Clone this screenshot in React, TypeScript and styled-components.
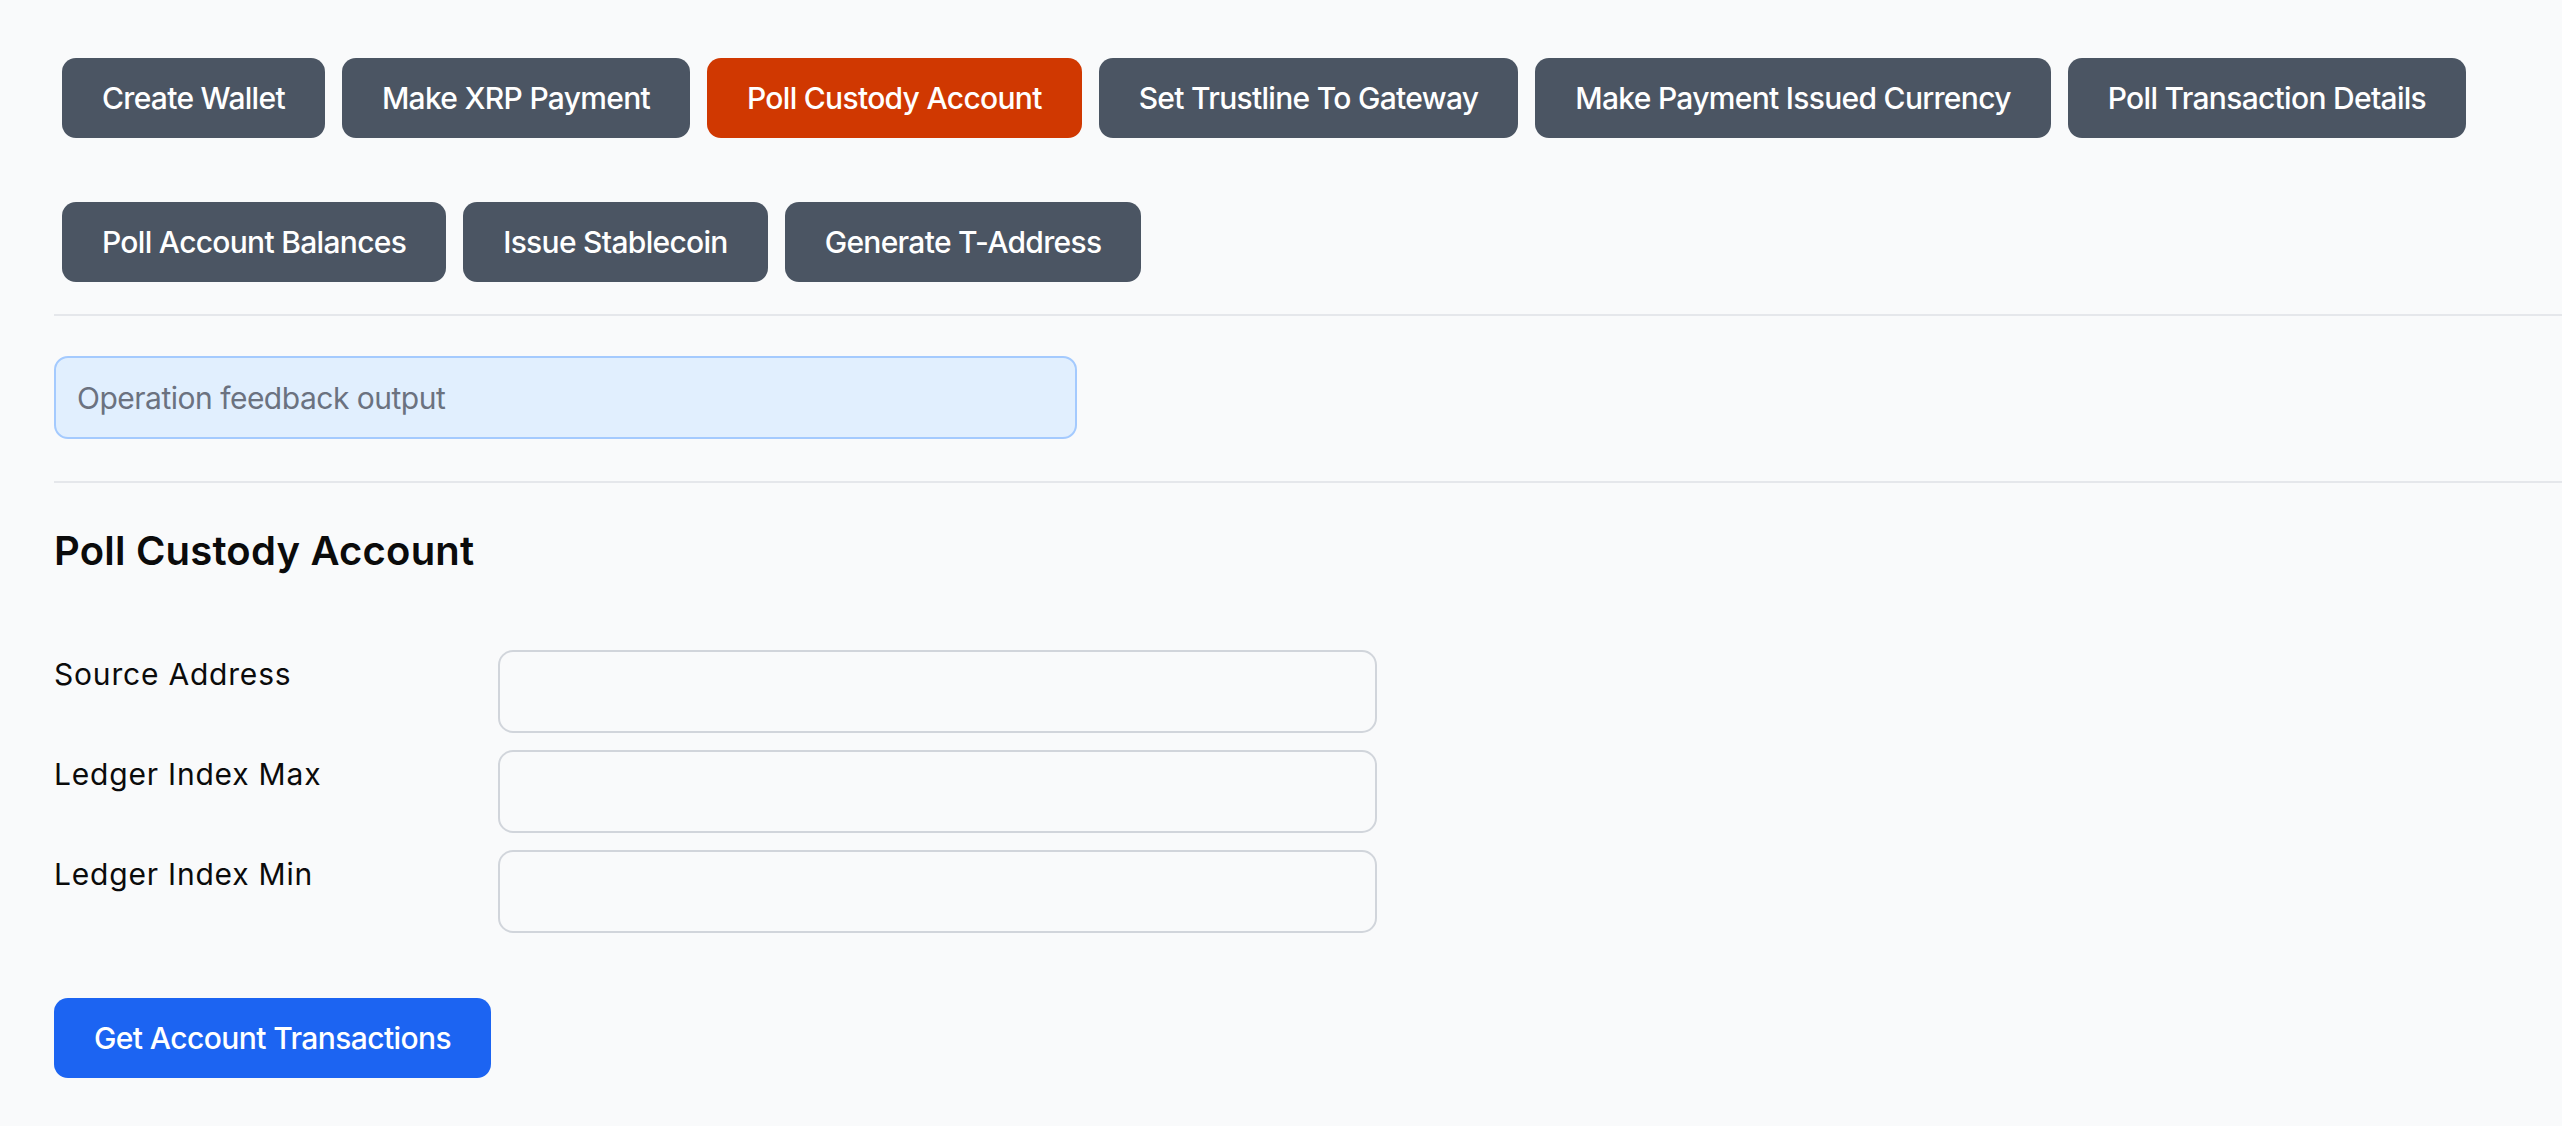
import React, { useState } from 'react'
import styled, { createGlobalStyle } from 'styled-components'

const colors = {
  page: '#F9FAFB',
  slate: '#4B5563',
  active: '#D03801',
  primary: '#1C64F2',
  divider: '#E5E7EB',
  inputBorder: '#D1D5DB',
  infoBg: '#E1EFFE',
  infoBorder: '#A4CAFE',
  muted: '#6B7280',
  text: '#0B0B0B',
}

const GlobalStyle = createGlobalStyle`
  html, body {
    margin: 0;
    padding: 0;
    background: ${colors.page};
  }
  body {
    font-family: Inter, "Noto Sans", "Liberation Sans", sans-serif;
    color: ${colors.text};
  }
  * { box-sizing: border-box; }
`

const PageSt = styled.div`
  min-height: 100vh;
  padding-left: 54px;
`

const ToolbarSt = styled.div`
  display: flex;
  flex-wrap: wrap;
  gap: 64px 17px;
  padding: 58px 0 32px 8px;
`

const OpButtonSt = styled.button<{ $active: boolean }>`
  height: 80px;
  padding: 0 40px;
  border: none;
  border-radius: 14px;
  background-color: ${({ $active }) => ($active ? colors.active : colors.slate)};
  color: #fff;
  font-family: inherit;
  font-size: 30px;
  font-weight: 500;
  letter-spacing: -0.7px;
  cursor: pointer;
  white-space: nowrap;
`

const DividerSt = styled.hr`
  margin: 0;
  border: none;
  height: 2px;
  background: ${colors.divider};
`

const FeedbackSt = styled.div`
  width: 1023px;
  height: 83px;
  margin: 40px 0 42px;
  padding: 0 21px;
  display: flex;
  align-items: center;
  border: 2px solid ${colors.infoBorder};
  border-radius: 14px;
  background: ${colors.infoBg};
  color: ${colors.muted};
  font-size: 30px;
  letter-spacing: -0.5px;
`

const TitleSt = styled.h2`
  margin: 38px 0 69px;
  font-size: 40px;
  line-height: 60px;
  font-weight: 600;
  letter-spacing: 0.2px;
`

const FormSt = styled.div`
  display: grid;
  grid-template-columns: 444px 879px;
  row-gap: 17px;
`

const LabelSt = styled.label`
  font-size: 30px;
  line-height: 45px;
  padding-top: 2px;
  letter-spacing: 0.8px;
`

const InputSt = styled.input`
  height: 83px;
  border: 2px solid ${colors.inputBorder};
  border-radius: 15px;
  background: ${colors.page};
  padding: 0 20px;
  font-family: inherit;
  font-size: 30px;
  outline: none;
`

const SubmitSt = styled.button`
  margin-top: 65px;
  height: 80px;
  padding: 0 40px;
  border: none;
  border-radius: 14px;
  background: ${colors.primary};
  color: #fff;
  font-family: inherit;
  font-size: 30px;
  font-weight: 500;
  letter-spacing: -0.6px;
  cursor: pointer;
`

const operations = [
  'Create Wallet',
  'Make XRP Payment',
  'Poll Custody Account',
  'Set Trustline To Gateway',
  'Make Payment Issued Currency',
  'Poll Transaction Details',
  'Poll Account Balances',
  'Issue Stablecoin',
  'Generate T-Address',
]

const fields = [
  { id: 'sourceAddress', label: 'Source Address' },
  { id: 'ledgerIndexMax', label: 'Ledger Index Max' },
  { id: 'ledgerIndexMin', label: 'Ledger Index Min' },
]

export default function App() {
  const [active, setActive] = useState('Poll Custody Account')

  return (
    <>
      <GlobalStyle />
      <PageSt>
        <ToolbarSt>
          {operations.map((op) => (
            <OpButtonSt key={op} $active={op === active} onClick={() => setActive(op)}>
              {op}
            </OpButtonSt>
          ))}
        </ToolbarSt>
        <DividerSt />
        <FeedbackSt>Operation feedback output</FeedbackSt>
        <DividerSt />
        <TitleSt>{active}</TitleSt>
        <FormSt>
          {fields.map((f) => (
            <React.Fragment key={f.id}>
              <LabelSt htmlFor={f.id}>{f.label}</LabelSt>
              <InputSt id={f.id} type="text" />
            </React.Fragment>
          ))}
        </FormSt>
        <SubmitSt>Get Account Transactions</SubmitSt>
      </PageSt>
    </>
  )
}
